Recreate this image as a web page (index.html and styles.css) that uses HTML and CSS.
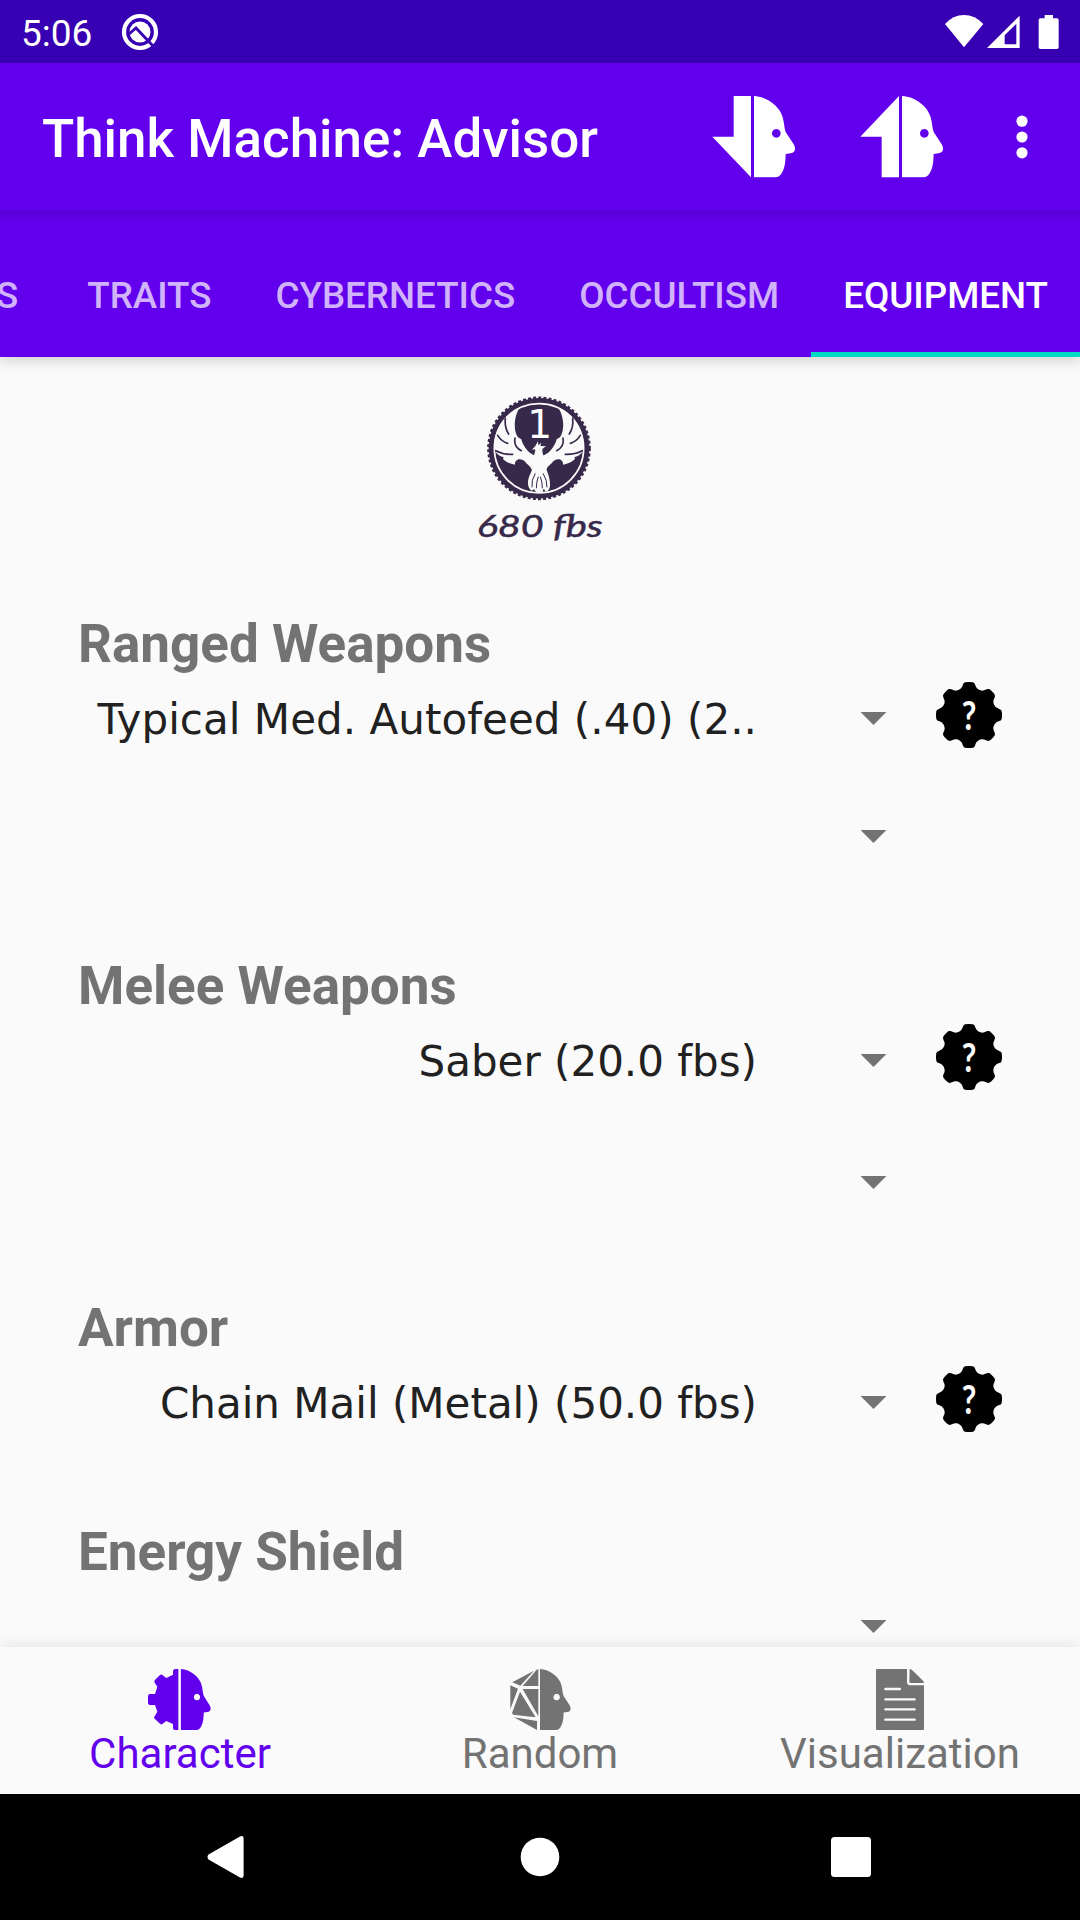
FILE: index.html
```html
<!DOCTYPE html>
<html lang="en">
<head>
<meta charset="utf-8">
<title>Think Machine: Advisor</title>
<link rel="stylesheet" href="styles.css">
</head>
<body>
<svg class="defs" aria-hidden="true">
  <symbol id="head" viewBox="222 286 126 245" preserveAspectRatio="none">
    <path fill-rule="evenodd" d="M222 286C262 288 300 318 308 350C313 368 312 380 317 394L341 431C348 443 347 456 332 458L317 460C316 480 316 500 305 518C300 526 294 530 288 530H222ZM289 385a13 13 0 1 0 .01 0Z"/>
  </symbol>
  <symbol id="cog" viewBox="-99 -99 198 198">
    <path d="M-12-98Q-17-97-19-89C-22-79-31-73-41-73C-50-73-56-84-67-73L-73-67C-84-56-73-50-73-41C-73-31-79-22-89-19Q-97-17-98-12Q-100 0-98 12Q-97 17-89 19C-79 22-73 31-73 41C-73 50-84 56-73 67L-67 73C-56 84-50 73-41 73C-31 73-22 79-19 89Q-17 97-12 98Q0 100 12 98Q17 97 19 89C22 79 31 73 41 73C50 73 56 84 67 73L73 67C84 56 73 50 73 41C73 31 79 22 89 19Q97 17 98 12Q100 0 98-12Q97-17 89-19C79-22 73-31 73-41C73-50 84-56 73-67L67-73C56-84 50-73 41-73C31-73 22-79 19-89Q17-97 12-98Q0-100-12-98Z"/>
  </symbol>
</svg>

<header class="status">
  <span class="clock">5:06</span>
  <svg class="q-icon" width="38" height="38" viewBox="-19 -19 38 38">
    <circle r="16" fill="none" stroke="#fff" stroke-width="4.2"/>
    <circle r="10.500" fill="#fff"/>
    <path d="M-11 2L-4-4L13 14" fill="none" stroke="#3700b3" stroke-width="2.8"/>
  </svg>
  <svg class="signals" width="118" height="38" viewBox="790 36 354 114" fill="#fff">
    <path d="M796 69Q820 42 853 42T911 69L853 139Z"/>
    <path fill-rule="evenodd" d="M1020 44V141H922ZM1010 68L975 103V130H1010Z"/>
    <path d="M1095 42H1120V52H1132Q1137 52 1137 57V139Q1137 144 1132 144H1082Q1077 144 1077 139V57Q1077 52 1082 52H1095Z"/>
  </svg>
</header>

<div class="toolbar">
  <h1 class="title">Think Machine: Advisor</h1>
  <svg class="tool" width="88" height="86" viewBox="90 280 264 258" fill="#fff">
    <path d="M161 286H213V530L97 408H161Z"/><use href="#head" x="222" y="286" width="126" height="245"/>
  </svg>
  <svg class="tool" width="88" height="86" viewBox="90 280 264 258" fill="#fff">
    <path d="M213 286V530H161V408H97Z"/><use href="#head" x="222" y="286" width="126" height="245"/>
  </svg>
  <svg class="more" width="12" height="44" viewBox="0 0 12 44" fill="#fff">
    <circle cx="6" cy="6.2" r="5.6"/><circle cx="6" cy="22" r="5.6"/><circle cx="6" cy="37.8" r="5.6"/>
  </svg>
</div>

<nav class="tabs">
  <span class="tab first">SKILLS</span>
  <span class="tab">TRAITS</span>
  <span class="tab">CYBERNETICS</span>
  <span class="tab">OCCULTISM</span>
  <span class="tab active">EQUIPMENT</span>
</nav>

<main class="content">
  <div class="purse">
    <svg width="160" height="170" viewBox="0 0 480 510">
      <circle cx="237" cy="205" r="151" fill="#37294a"/>
      <circle cx="237" cy="205" r="152" fill="none" stroke="#37294a" stroke-width="7" stroke-dasharray="9 6.5"/>
      <circle cx="237" cy="205" r="134" fill="none" stroke="#fafafa" stroke-width="5"/>
      <g id="wing">
        <path fill="#fafafa" d="M180 82C155 92 125 115 112 150C103 175 101 195 104 207C108 222 118 228 132 232C120 235 145 252 165 254C163 236 185 232 196 246C204 256 212 258 214 268L237 278V230L219 224C203 218 188 195 184 178L174 172C158 150 163 105 180 82Z"/>
        <path fill="none" stroke="#37294a" stroke-width="5" stroke-linecap="round" d="M136 115Q133 142 146 162M113 166Q124 184 143 190M107 212Q130 224 158 223M165 174Q160 200 184 212"/>
      </g>
      <use href="#wing" transform="matrix(-1 0 0 1 474 0)"/>
      <path fill="#fafafa" d="M222 235C222 218 228 214 225 208L216 209L226 198L234 184L235 196L244 188L241 198L258 199L247 207C246 220 252 228 252 240C252 262 272 285 270 318Q268 332 258 335L251 326L247 338H230L222 328L215 332C203 325 202 307 206 294C212 276 222 266 222 235Z"/>
      <path fill="none" stroke="#37294a" stroke-width="3" d="M226 280Q213 300 216 322M235 290Q229 305 229 325M249 280Q262 300 261 322M241 290Q247 305 247 325"/>
      <text class="level" x="239" y="174" text-anchor="middle">1</text>
      <text class="amount" x="50" y="470" textLength="378" lengthAdjust="spacingAndGlyphs">680 fbs</text>
    </svg>
  </div>

  <section class="group">
    <h2 class="heading">Ranged Weapons</h2>
    <div class="row">
      <span class="value clipped">Typical Med. Autofeed (.40) (2..</span><i class="arrow"></i>
      <svg class="help" viewBox="-99 -99 198 198"><use href="#cog" x="-99" y="-99" width="198" height="198"/><text class="help-mark" y="45" text-anchor="middle" transform="scale(.78 1)">?</text></svg>
    </div>
    <div class="row second"><span class="value"></span><i class="arrow"></i></div>
  </section>
  <section class="group melee">
    <h2 class="heading">Melee Weapons</h2>
    <div class="row">
      <span class="value">Saber (20.0 fbs)</span><i class="arrow"></i>
      <svg class="help" viewBox="-99 -99 198 198"><use href="#cog" x="-99" y="-99" width="198" height="198"/><text class="help-mark" y="45" text-anchor="middle" transform="scale(.78 1)">?</text></svg>
    </div>
    <div class="row second"><span class="value"></span><i class="arrow"></i></div>
  </section>
  <section class="group single">
    <h2 class="heading">Armor</h2>
    <div class="row">
      <span class="value">Chain Mail (Metal) (50.0 fbs)</span><i class="arrow"></i>
      <svg class="help" viewBox="-99 -99 198 198"><use href="#cog" x="-99" y="-99" width="198" height="198"/><text class="help-mark" y="45" text-anchor="middle" transform="scale(.78 1)">?</text></svg>
    </div>
  </section>
  <section class="group single">
    <h2 class="heading">Energy Shield</h2>
    <div class="row"><span class="value"></span><i class="arrow"></i></div>
  </section>
</main>

<nav class="bottom">
  <div class="item selected">
    <svg width="66" height="65" viewBox="261 81 198 195">
      <path d="M355 87H345Q339 88 339 93V104L319 114L306 104Q302 102 300 105L284 121Q282 124 284 128L292 140L285 162H269Q264 163 264 169V189Q264 194 269 195H285L292 215L283 230Q281 234 284 236L300 251Q304 254 308 251L319 243L339 252V264Q339 270 345 270H355Z"/>
      <use href="#head" x="362" y="87" width="92" height="184"/>
    </svg>
    <span>Character</span>
  </div>
  <div class="item">
    <svg width="66" height="65" viewBox="201 81 198 195">
      <path d="M217 127L282 92L241 137ZM248 138L290 89L295 87V138ZM211 136L234 146L211 208ZM240 155L216 219L219 224L287 232ZM248 147H295V229ZM222 232L291 243V270Z"/>
      <use href="#head" x="300" y="87" width="94" height="184"/>
    </svg>
    <span>Random</span>
  </div>
  <div class="item">
    <svg width="66" height="65" viewBox="321 81 198 195">
      <path d="M351 87H441V127Q442 136 450 136H492V267Q492 270 489 270H351Q348 270 348 267V90Q348 87 351 87ZM449 87Q453 87 456 90L489 122Q492 125 492 129H452Q448 129 448 125Z"/>
      <path stroke="#fafafa" stroke-width="7" stroke-linecap="round" d="M376 147H420M376 178H464M376 208H464M376 239H464"/>
    </svg>
    <span>Visualization</span>
  </div>
</nav>

<footer class="system">
  <svg width="44" height="44" viewBox="0 0 44 44" fill="#fff"><path d="M5.5 24.5Q3.5 22 5.5 19.500L37 1.500Q40.600 0 40.600 3.500V40.500Q40.600 44 37 42.500Z"/></svg>
  <svg width="44" height="44" viewBox="0 0 44 44"><circle cx="24" cy="22" r="19.3" fill="#fff"/></svg>
  <svg width="44" height="44" viewBox="0 0 44 44"><rect x="2" y="2" width="40" height="40" rx="3.500" fill="#fff"/></svg>
</footer>
</body>
</html>
```
FILE: styles.css
```css
* { box-sizing: border-box; }

body {
  margin: 0;
  width: 1080px;
  height: 1920px;
  overflow: hidden;
  display: flex;
  flex-direction: column;
  background: #fafafa;
  font-family: Roboto, sans-serif;
}

svg { display: block; flex: none; }
.defs { position: absolute; width: 0; height: 0; }

.status {
  flex: none;
  height: 63px;
  padding: 0 18.7px 0 21px;
  display: flex;
  align-items: center;
  background: #3700b3;
  color: #fff;
}
.clock { width: 100px; font-size: 37px; line-height: 43px; padding-top: 3px; }
.signals { margin-left: auto; }

.toolbar {
  flex: none;
  height: 147px;
  padding: 0 52px 0 42px;
  display: flex;
  align-items: center;
  background: #6200ee;
  color: #fff;
}
.title { margin: 5px auto 0 0; font-size: 52.9px; font-weight: 500; line-height: 62px; }
.tool { margin-right: 60px; }
.tool + .more { margin-left: 10px; }

.tabs {
  flex: none;
  position: relative;
  z-index: 1;
  height: 147px;
  display: flex;
  justify-content: flex-end;
  background: linear-gradient(#5800d6, #6200ee 12px);
  box-shadow: 0 4px 12px rgba(0, 0, 0, .16);
  clip-path: inset(0 0 -24px 0);
}
.tab {
  flex: none;
  padding: 0 32px;
  line-height: 171px;
  height: 147px;
  font-size: 36.75px;
  font-weight: 500;
  color: #d0b3fa;
}
.tab.first { margin-right: 5px; }
.tab.active { color: #fff; border-bottom: 5px solid #03dac5; }

.content { flex: none; height: 1290px; overflow: hidden; }
.purse { height: 256px; padding: 23px 0 0 460px; }
.level { font: 117px "DejaVu Sans", sans-serif; fill: #fff; }
.amount { font: italic 92px Lato, sans-serif; fill: #37294a; stroke: #37294a; stroke-width: 1.5px; }

.group { height: 342px; padding-left: 78px; }
.group.single { height: 224px; }
.heading { margin: 0; font-size: 53px; font-weight: 700; line-height: 63px; height: 62px; color: #737373; }
.row { height: 87px; display: flex; align-items: center; }
.row.second { margin-top: 31px; }
.melee .second { margin-top: 35px; }
.value {
  width: 679px;
  padding-top: 2px;
  text-align: right;
  white-space: nowrap;
  font: 42px/50px "DejaVu Sans", sans-serif;
  color: #212121;
}
.value.clipped { letter-spacing: .04px; }
.arrow {
  width: 26px;
  height: 13px;
  margin-left: 103.5px;
  background: #737373;
  clip-path: polygon(0 0, 100% 0, 50% 100%);
}
.help { width: 66px; height: 66px; margin: 0 0 7px 49.5px; }
.help-mark { font: 700 122px Lato, sans-serif; fill: #fff; }

.bottom {
  flex: none;
  position: relative;
  height: 147px;
  display: grid;
  grid-template-columns: repeat(3, 360px);
  box-shadow: 0 -2px 12px rgba(0, 0, 0, .09);
  background: #fafafa;
}
.item {
  padding-top: 20px;
  display: flex;
  flex-direction: column;
  align-items: center;
  color: #737373;
  fill: #737373;
  font-size: 42px;
  line-height: 50px;
}
.item span { margin-top: -3px; }
.item.selected { color: #6200ee; fill: #6200ee; }

.system {
  flex: none;
  position: relative;
  height: 126px;
  padding: 0 207px 0 203px;
  display: flex;
  align-items: center;
  justify-content: space-between;
  background: #000;
}
```
